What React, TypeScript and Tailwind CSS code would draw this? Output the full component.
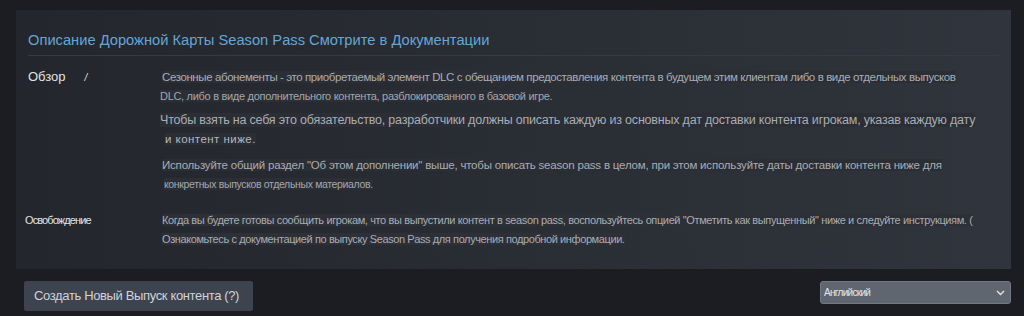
const overview = [
  {
    text: 'Сезонные абонементы - это приобретаемый элемент DLC с обещанием предоставления контента в будущем этим клиентам либо в виде отдельных выпусков',
    cls: 'h-[20px] leading-[20px] text-[11.5px] tracking-[-0.4px] text-[#a9adb3] ml-[2px]',
  },
  {
    text: 'DLC, либо в виде дополнительного контента, разблокированного в базовой игре.',
    cls: 'h-[19px] leading-[19px] text-[11px] tracking-[-0.3px] text-[#a3a7ad]',
  },
  {
    text: 'Чтобы взять на себя это обязательство, разработчики должны описать каждую из основных дат доставки контента игрокам, указав каждую дату',
    cls: 'mt-[5px] h-[19px] leading-[19px] text-[12.5px] tracking-[-0.2px] text-[#a9adb3]',
  },
  {
    text: 'и контент ниже.',
    cls: 'h-[18px] leading-[18px] text-[11.5px] tracking-[0.04em] text-[#b4b8bd] ml-[5px]',
  },
  {
    text: 'Используйте общий раздел "Об этом дополнении" выше, чтобы описать season pass в целом, при этом используйте даты доставки контента ниже для',
    cls: 'mt-[7px] h-[20px] leading-[20px] text-[11.5px] tracking-[-0.2px] text-[#a9adb3] ml-[2px]',
  },
  {
    text: 'конкретных выпусков отдельных материалов.',
    cls: 'h-[18px] leading-[18px] text-[10.5px] tracking-[-0.35px] text-[#a3a7ad] ml-[4px]',
  },
];

const release = [
  'Когда вы будете готовы сообщить игрокам, что вы выпустили контент в season pass, воспользуйтесь опцией "Отметить как выпущенный" ниже и следуйте инструкциям. (',
  'Ознакомьтесь с документацией по выпуску Season Pass для получения подробной информации.',
];

export default function App() {
  return (
    <div className="h-[316px] w-[1024px] overflow-hidden bg-[#1b1d22] pl-[16px] pr-[13px] pt-[10px] font-['Liberation_Sans',Arial,sans-serif]">
      <section className="h-[259px] bg-gradient-to-r from-[#23262c] to-[#30343c] px-[12px] pt-[20px]">
        <h2 className="border-b border-[#363a42] pb-[5px] text-[14.7px] leading-[20px] text-[#66a5d3]">
          Описание Дорожной Карты Season Pass Смотрите в Документации
        </h2>

        <div className="mt-[11px] flex">
          <div className="flex h-[20px] w-[132px] shrink-0 items-center gap-[19px] self-start">
            <span className="text-[13px] text-[#e2e3e5]">Обзор</span>
            <span className="text-[10px] italic text-[#e2e3e5]">/</span>
          </div>
          <div className="flex flex-col whitespace-nowrap">
            {overview.map((line) => (
              <div key={line.text} className={line.cls}>
                <span className="bg-[#2b2e35]">{line.text}</span>
              </div>
            ))}
          </div>
        </div>

        <div className="mt-[17px] flex">
          <div className="-ml-[3px] h-[20px] w-[137px] shrink-0 text-[11px] leading-[20px] tracking-[-0.9px] text-[#e2e3e5]">
            Освобождение
          </div>
          <div className="flex flex-col whitespace-nowrap text-[11px] text-[#a9adb3]">
            <div className="h-[20px] leading-[20px] tracking-[-0.38px]">
              <span className="bg-[#2d3037]">{release[0]}</span>
            </div>
            <div className="h-[18px] leading-[18px] tracking-[-0.4px]">
              <span className="bg-[#2d3037]">{release[1]}</span>
            </div>
          </div>
        </div>
      </section>

      <div className="mt-[12px] flex items-start justify-between">
        <button className="ml-[8px] h-[30px] w-[229px] whitespace-nowrap rounded-[2px] bg-[#3d4450] pl-[10px] text-left text-[13px] tracking-[-0.36px] text-[#cfd3d9]">
          Создать Новый Выпуск контента (?)
        </button>
        <div className="flex h-[23px] w-[191px] items-center justify-between rounded-[3px] border border-[#707884] bg-[#5f6670] pl-[3px] pr-[5px]">
          <span className="text-[10px] tracking-[-0.7px] text-[#e6e7e9]">Английский</span>
          <svg width="9" height="6" viewBox="0 0 9 6" fill="none">
            <path d="M1 1l3.5 3.5L8 1" stroke="#e6e7e9" strokeWidth="1.4" />
          </svg>
        </div>
      </div>
    </div>
  );
}
